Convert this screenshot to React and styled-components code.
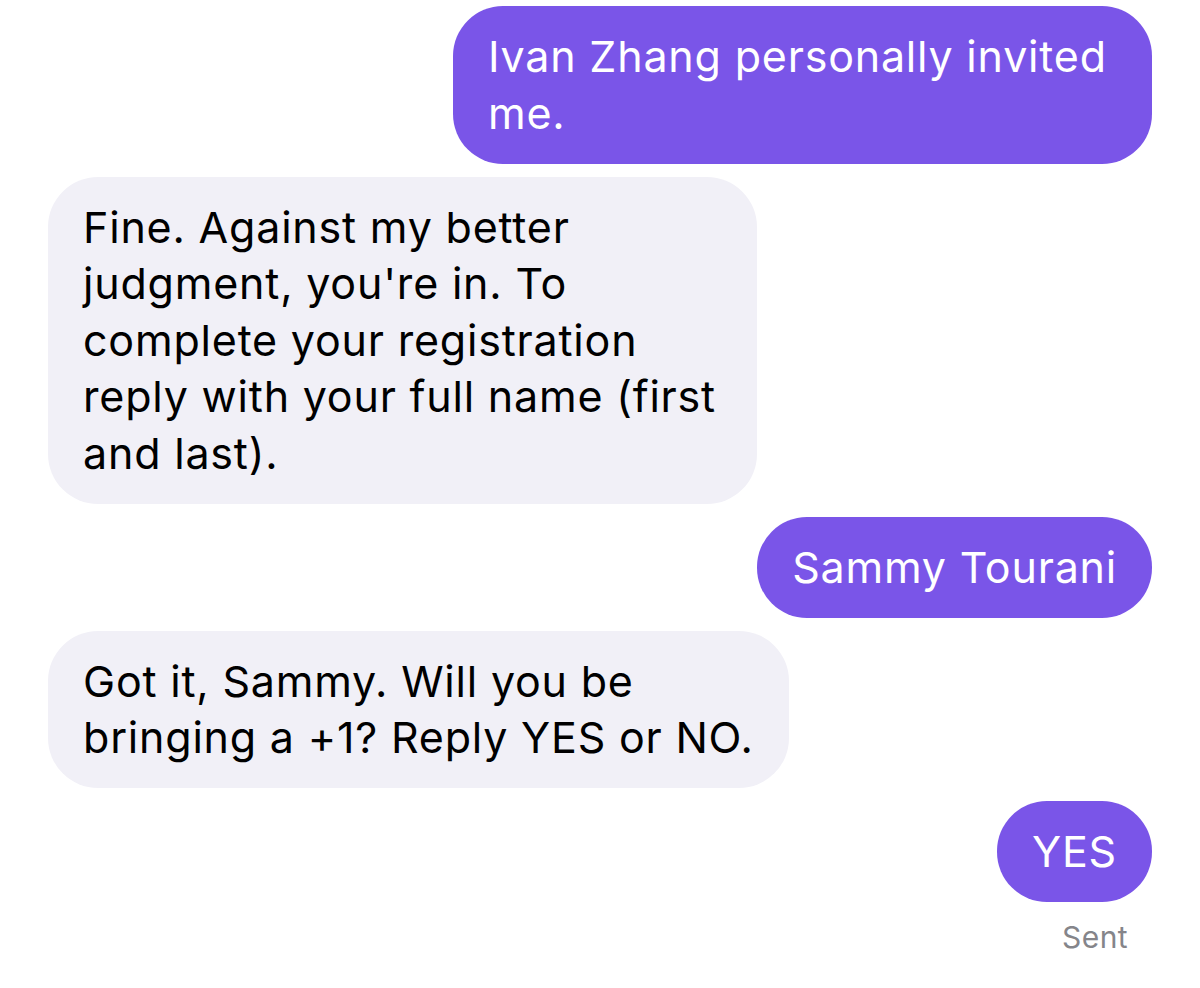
import styled, { createGlobalStyle } from "styled-components";

const GlobalStyle = createGlobalStyle`
   body {
      margin: 0;
      background: #ffffff;
      font-family: Inter, "Noto Sans", sans-serif;
   }
`;

const Thread = styled.div`
   display: flex;
   flex-direction: column;
   gap: 13px;
   padding: 6px 48px 0 48px;
`;

const Row = styled.div`
   display: flex;
   justify-content: ${(p) => (p.$sent ? "flex-end" : "flex-start")};
`;

const Bubble = styled.div`
   box-sizing: border-box;
   min-width: ${(p) => (p.$width ? `${p.$width}px` : "0")};
   padding: 22px 35px 22.5px 35px;
   border-radius: 50px;
   font-size: 43px;
   letter-spacing: 0.8px;
   line-height: 56.5px;
   background: ${(p) => (p.$sent ? "#7a55e8" : "#f1f0f7")};
   color: ${(p) => (p.$sent ? "#ffffff" : "#000000")};
   white-space: nowrap;
`;

const Status = styled.div`
   display: flex;
   justify-content: flex-end;
   padding-right: 24px;
   margin-top: 4px;
   font-size: 30px;
   letter-spacing: 0.4px;
   color: #85858a;
`;

const messages = [
   { sent: true, width: 699, lines: ["Ivan Zhang personally invited", "me."] },
   {
      sent: false,
      width: 709,
      lines: [
         "Fine. Against my better",
         "judgment, you're in. To",
         "complete your registration",
         "reply with your full name (first",
         "and last).",
      ],
   },
   { sent: true, lines: ["Sammy Tourani"] },
   { sent: false, width: 740, lines: ["Got it, Sammy. Will you be", "bringing a +1? Reply YES or NO."] },
   { sent: true, lines: ["YES"] },
];

const App = () => {
   return (
      <>
         <GlobalStyle />
         <Thread>
            {messages.map((m, i) => (
               <Row key={i} $sent={m.sent}>
                  <Bubble $sent={m.sent} $width={m.width}>
                     {m.lines.map((l, j) => (
                        <div key={j}>{l}</div>
                     ))}
                  </Bubble>
               </Row>
            ))}
            <Status>Sent</Status>
         </Thread>
      </>
   );
};

export default App;
